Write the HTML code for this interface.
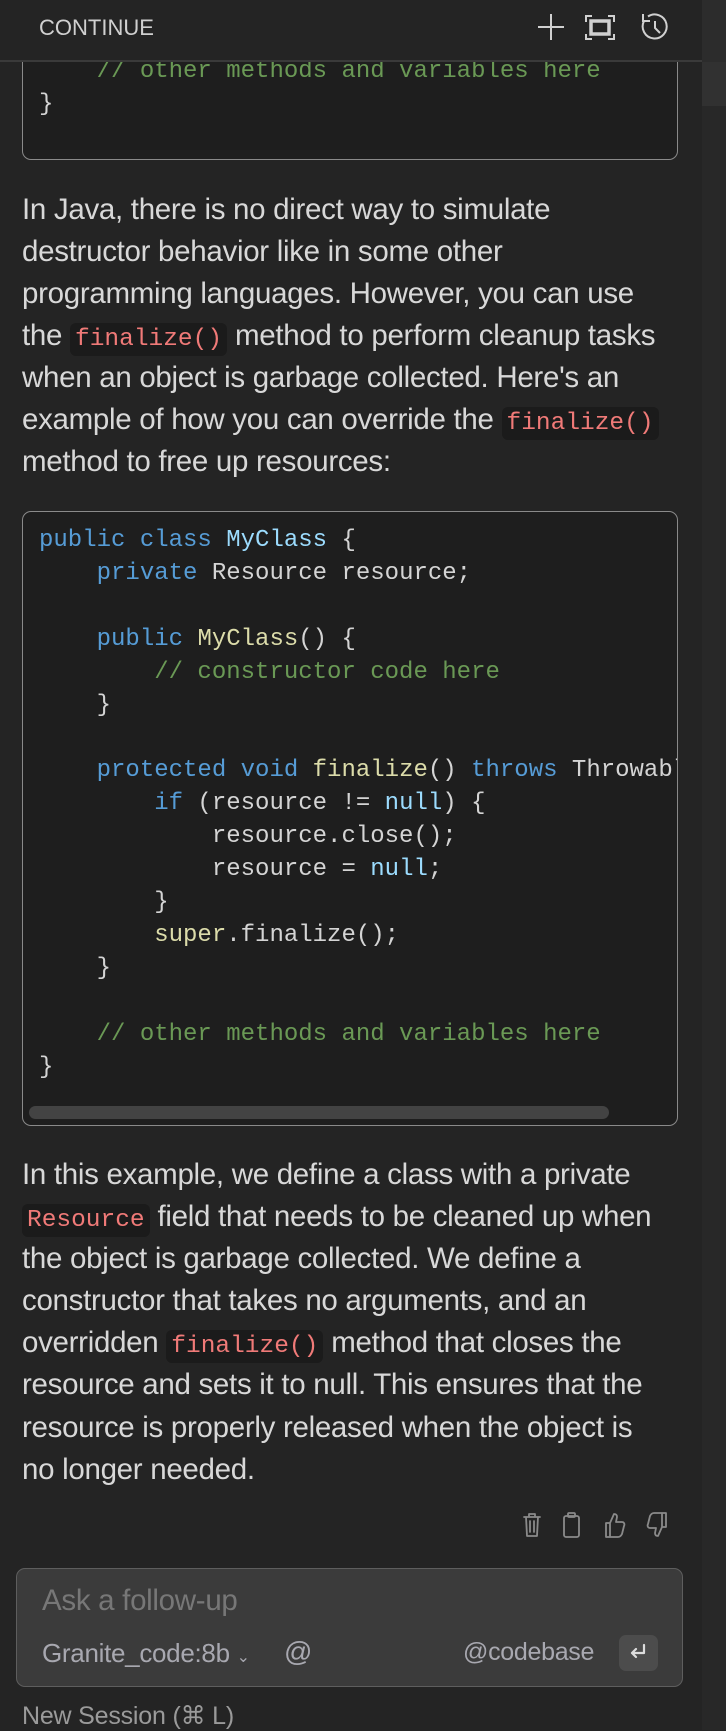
<!DOCTYPE html>
<html><head><meta charset="utf-8"><style>
*{margin:0;padding:0;box-sizing:border-box}
body{width:726px;height:1730px;background:#242424;position:relative;overflow:hidden;font-family:"Liberation Sans",sans-serif;color:#d6d6d6}
.abs{position:absolute}
.p{position:absolute;left:22px;font-size:29.5px;line-height:42px;color:#d8d8d8;white-space:nowrap;letter-spacing:-0.3px}
.ic{font-family:"Liberation Mono",monospace;font-size:24.5px;line-height:1;color:#f07a78;background:#1b1b1b;border-radius:6px;padding:3px 5px;letter-spacing:0}
.code{position:absolute;left:22px;width:656px;background:#1e1e1e;border:1px solid #8a8a8a;border-radius:9px;overflow:hidden}
pre{font-family:"Liberation Mono",monospace;font-size:24px;line-height:32.9px;color:#d4d4d4;white-space:pre}
.k{color:#569cd6}.c{color:#6a9955}.t{color:#9cdcfe}.f{color:#dcdcaa}
</style></head><body>
<div class="code" style="top:-200px;height:360px"><pre style="position:absolute;left:16px;top:255px"><span class="c">    // other methods and variables here</span>
}</pre></div>
<div class="abs" style="left:0;top:0;width:702px;height:62px;background:#242424;border-bottom:2px solid #3a3a3a"></div>
<div class="abs" style="left:39px;top:15px;font-size:22px;color:#d0d0d0">CONTINUE</div>
<svg class="abs" style="left:535px;top:11px" width="140" height="32" viewBox="0 0 140 32" fill="none" stroke="#d0d0d0" stroke-width="2">
<path d="M16 3v26M3 16h26"/>
<path d="M57 5h-6v6M51 23v5h6M73 5h6v6M79 23v5h-6"/><rect x="56" y="10" width="18" height="13" stroke-width="3.5"/>
<path d="M113 5.5A12 12 0 1 1 109 10"/><path d="M108 3v7h7"/><path d="M120 10v7l5 5"/>
</svg>
<div class="abs" style="left:702px;top:0;width:24px;height:62px;background:#2c2c2c"></div>
<div class="abs" style="left:702px;top:62px;width:24px;height:44px;background:#313131"></div>
<div class="abs" style="left:702px;top:106px;width:24px;height:1624px;background:#282828"></div>

<div class="p" style="top:189px">In Java, there is no direct way to simulate<br>destructor behavior like in some other<br>programming languages. However, you can use<br>the <span class="ic">finalize()</span> method to perform cleanup tasks<br>when an object is garbage collected. Here's an<br>example of how you can override the <span class="ic">finalize()</span><br>method to free up resources:</div>

<div class="code" style="top:511px;height:615px"><pre style="position:absolute;left:16px;top:13px"><span class="k">public class</span> <span class="t">MyClass</span> {
    <span class="k">private</span> Resource resource;

    <span class="k">public</span> <span class="f">MyClass</span>() {
        <span class="c">// constructor code here</span>
    }

    <span class="k">protected void</span> <span class="f">finalize</span>() <span class="k">throws</span> Throwable {
        <span class="k">if</span> (resource != <span class="t">null</span>) {
            resource.close();
            resource = <span class="t">null</span>;
        }
        <span class="f">super</span>.finalize();
    }

    <span class="c">// other methods and variables here</span>
}</pre>
<div class="abs" style="left:6px;top:594px;width:580px;height:13px;border-radius:7px;background:#434343"></div></div>

<div class="p" style="top:1154px;line-height:42.1px">In this example, we define a class with a private<br><span class="ic">Resource</span> field that needs to be cleaned up when<br>the object is garbage collected. We define a<br>constructor that takes no arguments, and an<br>overridden <span class="ic">finalize()</span> method that closes the<br>resource and sets it to null. This ensures that the<br>resource is properly released when the object is<br>no longer needed.</div>

<svg class="abs" style="left:518px;top:1510px" width="160" height="30" viewBox="0 0 160 30" fill="none" stroke="#8a8a8a" stroke-width="1.8" stroke-linejoin="round" stroke-linecap="round">
<path d="M6 7h16M11 7V4h6v3M8 7l1 19h10l1-19M12 11v11M16 11v11"/>
<rect x="46" y="6" width="15" height="21" rx="2"/><rect x="50" y="3" width="7" height="4" rx="1"/>
<path d="M88 13h4l4-9c2 0 3 1 3 3l-1 5h6c2 0 3 2 2 4l-2 8c-1 2-2 3-4 3h-8M88 13v14h4V13z"/>
<path d="M148 17h-4l-4 9c-2 0-3-1-3-3l1-5h-6c-2 0-3-2-2-4l2-8c1-2 2-3 4-3h8M148 17V3h-4v14z"/>
</svg>

<div class="abs" style="left:16px;top:1568px;width:667px;height:119px;background:#3b3b3b;border:1px solid #5e5e5e;border-radius:9px"></div>
<div class="abs" style="left:42px;top:1584px;font-size:29.5px;color:#777;letter-spacing:-0.3px">Ask a follow-up</div>
<div class="abs" style="left:42px;top:1638px;font-size:26px;color:#a8a8b0;letter-spacing:-0.3px">Granite_code:8b <span style="font-size:16px">&#8964;</span></div>
<div class="abs" style="left:284px;top:1636px;font-size:28px;color:#a8a8b0">@</div>
<div class="abs" style="left:463px;top:1638px;font-size:25px;color:#a8a8b0;letter-spacing:-0.3px">@codebase</div>
<div class="abs" style="left:619px;top:1635px;width:39px;height:36px;border-radius:7px;background:#4c4c4c"></div>
<svg class="abs" style="left:626px;top:1641px" width="24" height="24" viewBox="0 0 24 24" fill="none" stroke="#dcdcdc" stroke-width="2.2" stroke-linecap="round" stroke-linejoin="round"><path d="M18 4v8H6M10 8l-4 4 4 4"/></svg>
<div class="abs" style="left:22px;top:1701px;font-size:25px;color:#9a9a9a;letter-spacing:-0.2px">New Session (⌘ L)</div>
</body></html>
